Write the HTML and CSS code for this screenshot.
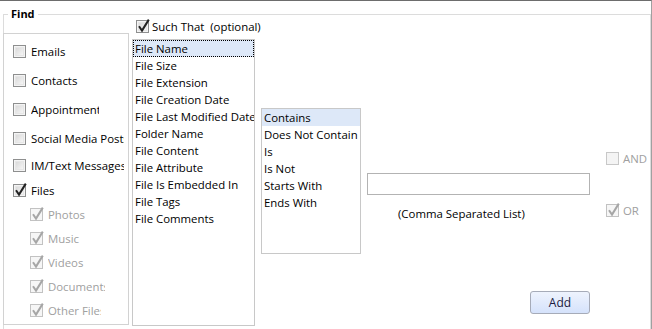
FILE: index.html
```html
<!DOCTYPE html>
<html lang="en">
<head>
    <meta charset="UTF-8">
    <title>Find</title>
    <link rel="stylesheet" href="styles.css">
</head>
<body>
    <div class="window">
        <fieldset class="find">
            <legend>Find</legend>
            <div class="find-body">
                <div class="sources">
                    <div class="row"><svg class="cb"><use href="#cb-off"/></svg><span class="label">Emails</span></div>
                    <div class="row"><svg class="cb"><use href="#cb-off"/></svg><span class="label">Contacts</span></div>
                    <div class="row"><svg class="cb"><use href="#cb-off"/></svg><span class="label label-appt">Appointments</span></div>
                    <div class="row row-social"><svg class="cb"><use href="#cb-off"/></svg><span class="label label-wide">Social Media Posts</span></div>
                    <div class="row row-im"><svg class="cb"><use href="#cb-off"/></svg><span class="label label-wide">IM/Text Messages</span></div>
                    <div class="row row-sub-head"><svg class="cb"><use href="#cb-on"/></svg><span class="label">Files</span></div>
                    <div class="row sub"><svg class="cb"><use href="#cb-on-dis"/></svg><span class="label">Photos</span></div>
                    <div class="row sub"><svg class="cb"><use href="#cb-on-dis"/></svg><span class="label">Music</span></div>
                    <div class="row sub"><svg class="cb"><use href="#cb-on-dis"/></svg><span class="label">Videos</span></div>
                    <div class="row sub"><svg class="cb"><use href="#cb-on-dis"/></svg><span class="label label-docs">Documents</span></div>
                    <div class="row sub"><svg class="cb"><use href="#cb-on-dis"/></svg><span class="label label-other">Other Files</span></div>
                </div>

                <div class="field-column">
                    <div class="such-that"><svg class="cb"><use href="#cb-on"/></svg><span>Such That&nbsp; (optional)</span></div>
                    <ul class="listbox fields">
                        <li class="selected focused">File Name</li>
                        <li>File Size</li>
                        <li>File Extension</li>
                        <li>File Creation Date</li>
                        <li>File Last Modified Date</li>
                        <li>Folder Name</li>
                        <li>File Content</li>
                        <li>File Attribute</li>
                        <li>File Is Embedded In</li>
                        <li>File Tags</li>
                        <li>File Comments</li>
                    </ul>
                </div>

                <ul class="listbox operators">
                    <li class="selected">Contains</li>
                    <li>Does Not Contain</li>
                    <li>Is</li>
                    <li>Is Not</li>
                    <li>Starts With</li>
                    <li>Ends With</li>
                </ul>

                <div class="value-column">
                    <input class="value" type="text">
                    <div class="hint">(Comma Separated List)</div>
                    <button class="add-btn">Add</button>
                </div>

                <div class="logic-column">
                    <div class="logic disabled"><svg class="cb"><use href="#cb-off-dis"/></svg><span>AND</span></div>
                    <div class="logic disabled logic-or"><svg class="cb"><use href="#cb-on-dis"/></svg><span>OR</span></div>
                </div>
            </div>
        </fieldset>
    </div>

    <div class="defs">
        <svg width="0" height="0">
            <defs>
                <linearGradient id="cb-fill" x1="0" y1="0" x2="1" y2="1">
                    <stop offset="0" stop-color="#d8d8d8"/>
                    <stop offset="1" stop-color="#f7f7f7"/>
                </linearGradient>
                <symbol id="cb-off" viewBox="0 0 13 13" overflow="visible">
                    <rect x="0.5" y="0.5" width="12" height="12" fill="#f4f4f4" stroke="#8e8f8f"/>
                    <rect x="2.5" y="2.5" width="8" height="8" fill="url(#cb-fill)" stroke="#e6e6e6"/>
                </symbol>
                <symbol id="cb-on" viewBox="0 0 13 13" overflow="visible">
                    <rect x="0.5" y="0.5" width="12" height="12" fill="#f4f4f4" stroke="#8e8f8f"/>
                    <rect x="2.5" y="2.5" width="8" height="8" fill="url(#cb-fill)" stroke="#e6e6e6"/>
                    <path d="M3 6.2 L6 10.6 L12.8 -0.4" fill="none" stroke="#222" stroke-width="2"/>
                </symbol>
                <symbol id="cb-on-dis" viewBox="0 0 13 13" overflow="visible">
                    <rect x="0.5" y="0.5" width="12" height="12" fill="#f6f6f6" stroke="#c2c2c2"/>
                    <path d="M3 6.2 L6 10.6 L12.8 -0.4" fill="none" stroke="#a6a6a6" stroke-width="2"/>
                </symbol>
                <symbol id="cb-off-dis" viewBox="0 0 13 13" overflow="visible">
                    <rect x="0.5" y="0.5" width="12" height="12" fill="#f4f4f4" stroke="#c8c8c8"/>
                </symbol>
            </defs>
        </svg>
    </div>
</body>
</html>
```

FILE: styles.css
```css
body {
    margin: 0;
    background-color: #ffffff;
    font-family: "Open Sans", "Noto Sans", sans-serif;
    font-size: 11.4px;
    color: #000000;
}

.window {
    height: 329px;
    box-sizing: border-box;
    border-top: 1px solid #6d6d6d;
    border-right: 1px solid #a0a0a0;
    overflow: hidden;
}

.find {
    margin: 6px 0 0 3px;
    padding: 0;
    height: 360px;
    border: 1px solid #dcdcdc;
    border-bottom: none;
}

.find legend {
    font-weight: bold;
    font-size: 11px;
    line-height: 14px;
    padding: 0 3px;
    margin-left: 4px;
}

.find-body {
    display: flex;
    align-items: flex-start;
}

/* checkbox glyph */
.cb {
    width: 13px;
    height: 13px;
    flex: 0 0 13px;
    overflow: visible;
}

/* left column: sources */
.sources {
    flex: 0 0 126px;
    margin: 12px 0 0 -1px;
    width: 126px;
    height: 292px;
    box-sizing: border-box;
    border: 1px solid #d2d2d2;
    padding: 3px 0 0 9px;
}

.row {
    display: flex;
    align-items: center;
    gap: 5px;
    height: 29px;
}

.row-social {
    height: 28px;
}

.row-im {
    height: 27px;
}

.row-sub-head {
    height: 23px;
}

.row.sub {
    height: 24px;
    padding-left: 17px;
    color: #a0a0a0;
}

.label {
    display: block;
    width: 93px;
    overflow: hidden;
    white-space: nowrap;
}

.label-appt {
    width: 68px;
}

.row.sub .label {
    width: 57px;
}

.row.sub .label-docs {
    width: 57px;
}

.row.sub .label-other {
    width: 53px;
}

/* middle column: field list */
.field-column {
    flex: 0 0 123px;
    width: 123px;
    margin-left: 3px;
}

.such-that {
    display: flex;
    align-items: center;
    gap: 3px;
    height: 17px;
    margin-top: -3px;
    padding-left: 4px;
    white-space: nowrap;
}

.listbox {
    list-style: none;
    margin: 0;
    padding: 0;
    box-sizing: border-box;
    border: 1px solid #c8c8c8;
    overflow: hidden;
}

.listbox li {
    height: 17px;
    line-height: 17px;
    padding-left: 2px;
    white-space: nowrap;
    overflow: hidden;
    box-sizing: border-box;
}

.listbox li.selected {
    background-color: #dde8f8;
}

.listbox li.focused {
    outline: 1px dotted #000000;
    outline-offset: -1px;
}

.fields {
    margin-top: 4px;
    width: 123px;
    height: 287px;
}

.operators {
    flex: 0 0 100px;
    margin: 87px 0 0 6px;
    width: 100px;
    height: 146px;
}

/* value input */
.value-column {
    flex: 0 0 223px;
    display: flex;
    flex-direction: column;
    margin: 152px 0 0 6px;
    width: 223px;
}

.value {
    height: 22px;
    box-sizing: border-box;
    margin: 0;
    border: 1px solid #b3b3b3;
    font: inherit;
}

.hint {
    margin-top: 11px;
    padding-left: 31px;
    line-height: 16px;
}

.add-btn {
    align-self: flex-end;
    margin-top: 69px;
    width: 60px;
    height: 23px;
    border: 1px solid #a6abb8;
    border-radius: 3px;
    background: linear-gradient(#eef3fd, #d5e2fb);
    font: inherit;
    font-size: 12px;
    color: #1a1a40;
}

/* and / or */
.logic-column {
    margin: 129px 0 0 16px;
}

.logic {
    display: flex;
    align-items: center;
    gap: 4px;
    height: 17px;
}

.logic.disabled {
    color: #a0a0a0;
}

.logic-or {
    margin-top: 35px;
}

.defs {
    height: 0;
    overflow: hidden;
}
```
